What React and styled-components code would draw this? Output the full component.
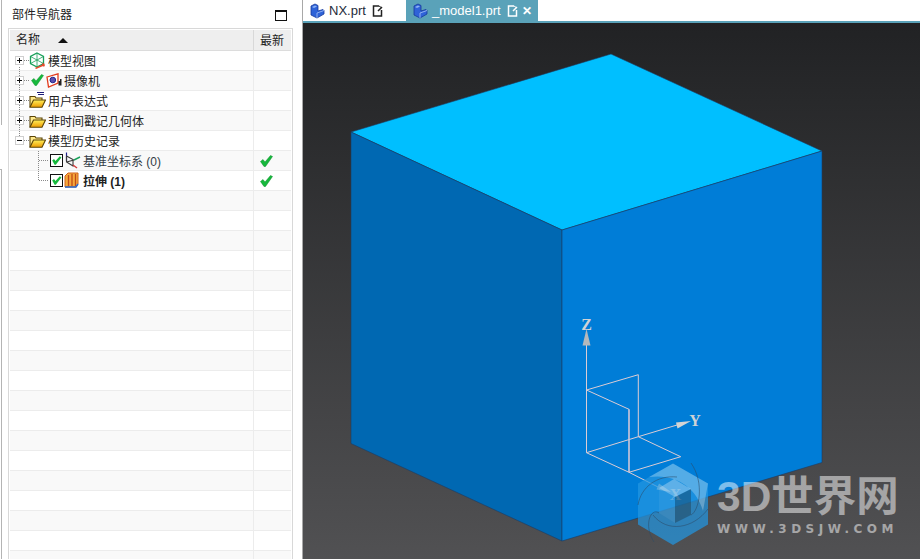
import React from 'react';
import styled, { createGlobalStyle } from 'styled-components';

const FONT = '"Liberation Sans", "Noto Sans CJK SC", sans-serif';

const GlobalStyle = createGlobalStyle`
  html, body {
    margin: 0;
    padding: 0;
    height: 100%;
    background: #fff;
    overflow: hidden;
  }
  #root { height: 100%; }
`;

const Page = styled.div`
  display: flex;
  width: 920px;
  height: 559px;
  overflow: hidden;
  font-family: ${FONT};
  font-size: 12px;
  color: #222;
`;

const Gutter = styled.div`
  display: flex;
  flex-direction: column;
  justify-content: space-between;
  width: 2px;
`;
const GutterPiece = styled.div`
  box-sizing: border-box;
  height: ${(p) => p.$h}px;
  border-right: 1px solid #b4b4b4;
  border-top: ${(p) => (p.$top ? '1px solid #b4b4b4' : 'none')};
`;

const Panel = styled.aside`
  display: flex;
  flex-direction: column;
  width: 300px;
  padding-left: 6px;
  box-sizing: border-box;
`;
const PanelHead = styled.header`
  display: flex;
  align-items: center;
  justify-content: space-between;
  height: 28px;
  padding: 0 16px 2px 4px;
  box-sizing: border-box;
  width: 295px;
`;
const Maximize = styled.span`
  display: block;
  box-sizing: border-box;
  width: 12px;
  height: 11px;
  margin-top: 5px;
  border: 1px solid #111;
  border-top-width: 2px;
`;

const Tree = styled.div`
  box-sizing: border-box;
  flex: 1;
  width: 285px;
  padding: 1px;
  border: 1px solid #d8d8d8;
  border-bottom: none;
  overflow: hidden;
`;
const HeadRow = styled.div`
  display: flex;
  height: 21px;
  box-sizing: border-box;
  background: #eeeeee;
  border-bottom: 1px solid #dcdcdc;
  line-height: 22px;
`;
const HeadName = styled.div`
  display: flex;
  align-items: center;
  width: 243px;
  padding-left: 6px;
  box-sizing: border-box;
`;
const SortArrow = styled.span`
  width: 0;
  height: 0;
  margin-left: 18px;
  border-left: 5px solid transparent;
  border-right: 5px solid transparent;
  border-bottom: 5px solid #111;
`;
const HeadLatest = styled.div`
  width: 38px;
  padding-left: 6px;
  box-sizing: border-box;
  border-left: 1px solid #d8d8d8;
`;

const Row = styled.div`
  display: flex;
  height: 20px;
  box-sizing: border-box;
  background: ${(p) => (p.$odd ? '#f9f9f9' : '#ffffff')};
  border-bottom: 1px solid #ececec;
`;
const NameCell = styled.div`
  display: flex;
  align-items: center;
  width: 243px;
  padding-bottom: 1px;
  box-sizing: border-box;
`;
const LatestCell = styled.div`
  display: flex;
  align-items: center;
  width: 38px;
  padding-left: 6px;
  box-sizing: border-box;
  border-left: 1px solid #ececec;
`;
const Guide = styled.svg`
  flex: none;
  display: block;
  width: ${(p) => p.width}px;
  height: 20px;
  margin-top: 1px;
`;
const IconSlot = styled.span`
  display: flex;
  flex: none;
  margin-left: ${(p) => p.$gap || 0}px;
`;
const Label = styled.span`
  margin-left: ${(p) => p.$gap}px;
  font-weight: ${(p) => (p.$bold ? 700 : 400)};
  color: ${(p) => (p.$muted ? '#333c46' : '#222')};
  white-space: nowrap;
`;

const Splitter = styled.div`
  width: 1px;
  background: #a8a8a8;
  flex: none;
`;

const Main = styled.main`
  flex: 1;
  display: flex;
  flex-direction: column;
  min-width: 0;
`;
const TabBar = styled.nav`
  display: flex;
  height: 21px;
  background: #fff;
  border-bottom: 2px solid #5aa2b9;
`;
const Tab = styled.div`
  display: flex;
  align-items: center;
  box-sizing: border-box;
  width: ${(p) => p.$w}px;
  padding-left: 6px;
  font-size: 13px;
  background: ${(p) => (p.$active ? '#5aa2b9' : '#ffffff')};
  color: ${(p) => (p.$active ? '#ffffff' : '#1e2a3a')};
`;
const TabText = styled.span`
  margin: 0 6px 0 4px;
`;
const CloseMark = styled.span`
  margin-left: 4px;
  font-size: 12px;
  font-weight: 700;
  line-height: 1;
`;

const Canvas = styled.div`
  position: relative;
  flex: 1;
  background: linear-gradient(180deg, #212224 0%, #515153 100%);
  overflow: hidden;
`;
const Scene = styled.svg`
  display: block;
  width: 617px;
  height: 536px;
`;
const Watermark = styled.div`
  position: absolute;
  right: 25px;
  bottom: 13px;
  display: flex;
  align-items: center;
  gap: 8px;
`;
const MarkText = styled.div`
  display: flex;
  flex-direction: column;
  width: 178px;
  color: rgba(255, 255, 255, 0.5);
  font-weight: 700;
`;
const MarkTitle = styled.div`
  font-size: 42.5px;
  line-height: 46px;
  white-space: nowrap;
`;
const MarkUrl = styled.div`
  margin-top: 2px;
  font-family: "DejaVu Sans", sans-serif;
  font-size: 12px;
  line-height: 14px;
  letter-spacing: 4.5px;
  white-space: nowrap;
`;

const Check = () => (
  <svg width="13" height="12" viewBox="0 0 13 12">
    <path d="M0.5 6.5 L3 4.5 L5 7 L10.5 0.5 L12.5 1.5 L5.5 11.5 L4 11.5 Z" fill="#16b83c" stroke="#0c8f2c" strokeWidth="0.5" />
  </svg>
);

const CheckBox = () => (
  <svg width="13" height="13" viewBox="0 0 13 13">
    <rect x="0.5" y="0.5" width="12" height="12" fill="#fff" stroke="#111" />
    <path d="M2.2 6.5 L4 5 L5.5 7 L9.8 2.2 L11.4 3.4 L5.8 10.8 L4.6 10.8 Z" fill="#16b83c" />
  </svg>
);

const Folder = ({ lines }) => (
  <svg width="17" height="16" viewBox="0 0 17 16">
    {lines && <path d="M8 0.5 H15 M9 2.5 H15" stroke="#1c1c78" strokeWidth="1" />}
    <path d="M1 15 V4.5 H6 L7 6 H13 V8" fill="#ffe98a" stroke="#5a4408" strokeWidth="1.1" />
    <path d="M1 15.3 L4.5 8 H16.5 L13 15.3 Z" fill="url(#folderFill)" stroke="#5a4408" strokeWidth="1.1" />
  </svg>
);

const ModelViews = () => (
  <svg width="17" height="17" viewBox="0 0 17 17">
    <g fill="none" stroke="#1aa05a" strokeWidth="1.3">
      <path d="M8 1 L14.5 4.5 V11.5 L8 15 L1.5 11.5 V4.5 Z" />
      <path d="M1.5 4.5 L8 8 L14.5 4.5 M8 8 V15 M8 1 V8 M1.5 11.5 L8 8 L14.5 11.5" strokeWidth="0.8" />
    </g>
    <path d="M6.5 16.5 L15.5 12.5 M15.5 12.5 L13 12 M15.5 12.5 L14.5 14.5" stroke="#e8482a" strokeWidth="1.4" fill="none" />
  </svg>
);

const Camera = () => (
  <svg width="17" height="15" viewBox="0 0 17 15">
    <path d="M1 4 L12 0.8 V10 L2.5 14 Z" fill="#fff" stroke="#e23a1c" strokeWidth="1.3" />
    <circle cx="6.8" cy="7" r="2.8" fill="#5a4fb0" stroke="#22228a" strokeWidth="1" />
    <path d="M12.5 8 H14 V6 H15.5 V12.5 H12.5 Z" fill="#222" />
  </svg>
);

const Datum = () => (
  <svg width="17" height="17" viewBox="0 0 17 17">
    <path d="M2.5 0.5 V9" stroke="#22228a" strokeWidth="1.2" />
    <path d="M2.5 4 L9 7.5 V14 L2.5 10 V4 M2.5 10 L10 8" fill="none" stroke="#3a3a3a" strokeWidth="1.1" />
    <path d="M10 8 L16 5" stroke="#1aa05a" strokeWidth="1.4" />
    <path d="M9 13 L13 16" stroke="#d43a3a" strokeWidth="1.4" />
  </svg>
);

const Extrude = () => (
  <svg width="15" height="16" viewBox="0 0 15 16">
    <path d="M1 4 L4 1 H14 V12 L12 15 H1 Z" fill="#f5a93c" stroke="#d0601a" strokeWidth="1" />
    <path d="M4.5 3 V14 M8 2 V14 M11.5 2 V14" stroke="#c04a18" strokeWidth="1.3" />
    <path d="M1 15 H12 L14 12" fill="none" stroke="#2a6ad0" strokeWidth="1.5" />
  </svg>
);

const PartIcon = () => (
  <svg width="16" height="16" viewBox="0 0 16 16">
    <path d="M2 3 L6 1 L9 2.5 V8 L14 6.5 L15 7.5 V11 L8 15 L2 12 Z" fill="#2f63d8" stroke="#16389a" strokeWidth="0.8" />
    <path d="M3 4 L6 2.5 L8 3.5 L5 5 Z" fill="#8db2f5" />
    <path d="M8 15 V10 L15 7.5" fill="none" stroke="#a8c4f8" strokeWidth="0.8" />
  </svg>
);

const SaveMark = ({ color }) => (
  <svg width="11" height="12" viewBox="0 0 11 12">
    <path d="M7 1 H1.5 V11 H9.5 V5 M6 6 L10 2" fill="none" stroke={color} strokeWidth="1.5" />
    <path d="M7 1 L10 3" stroke={color} strokeWidth="1" />
  </svg>
);

// top-level gutter: expander box and dotted guide lines
const TopGuide = ({ minus, from, to }) => (
  <Guide width="19" viewBox="0 0 19 20">
    {from !== undefined && (
      <path d={`M9.5 ${from} V${to}`} stroke="#8a8a8a" strokeDasharray="1 1" />
    )}
    <path d="M14 9.5 H19" stroke="#8a8a8a" strokeDasharray="1 1" />
    <rect x="5.5" y="5.5" width="8" height="8" fill="#fff" stroke="#cfcfcf" />
    <path d="M7 9.5 H12" stroke="#111" />
    {!minus && <path d="M9.5 7 V12" stroke="#111" />}
  </Guide>
);

const ChildGuide = ({ to }) => (
  <Guide width="38" viewBox="0 0 38 20">
    <path d={`M28.5 0 V${to}`} stroke="#8a8a8a" strokeDasharray="1 1" />
    <path d="M29 9.5 H38" stroke="#8a8a8a" strokeDasharray="1 1" />
  </Guide>
);

const treeRows = [
  { guide: <TopGuide from={16} to={20} />, icons: <IconSlot><ModelViews /></IconSlot>, label: '模型视图', gap: 2 },
  { guide: <TopGuide from={0} to={20} />, icons: <><IconSlot $gap={2}><Check /></IconSlot><IconSlot $gap={2}><Camera /></IconSlot></>, label: '摄像机', gap: 1 },
  { guide: <TopGuide from={0} to={20} />, icons: <IconSlot><Folder lines /></IconSlot>, label: '用户表达式', gap: 2 },
  { guide: <TopGuide from={0} to={20} />, icons: <IconSlot><Folder /></IconSlot>, label: '非时间戳记几何体', gap: 2 },
  { guide: <TopGuide minus from={0} to={6} />, icons: <IconSlot><Folder /></IconSlot>, label: '模型历史记录', gap: 2 },
  { guide: <ChildGuide to={20} />, icons: <><IconSlot $gap={2}><CheckBox /></IconSlot><IconSlot $gap={1}><Datum /></IconSlot></>, label: '基准坐标系 (0)', gap: 2, muted: true, latest: true },
  { guide: <ChildGuide to={10} />, icons: <><IconSlot $gap={2}><CheckBox /></IconSlot><IconSlot $gap={1}><Extrude /></IconSlot></>, label: '拉伸 (1)', gap: 4, bold: true, latest: true },
];

const blankRows = Array.from({ length: 19 });

const Triad = () => (
  <g>
    <g fill="none" stroke="#dcccd4" strokeWidth="1">
      <path d="M586.5 345 V452.7 L629 472.3 L680.7 456.7 L638.3 436.7 L586.5 452.7" />
      <path d="M586.5 390 L638.3 374.7 V436.7 M586.5 390 L629 409.3" />
      <path d="M638.3 436.7 L677 425 M629 472.3 L660 488" />
      <path d="M629 409.3 V472.3" strokeWidth="1.6" stroke="#cfc6d8" />
    </g>
    <path d="M586.5 329 L590.5 345.5 H582.5 Z" fill="#b4b8bc" />
    <path d="M691 421 L676 422.5 L677.5 428.5 Z" fill="#d4d4d4" />
    <path d="M671 492 L659 483.5 L656.5 489.5 Z" fill="#d8d8d8" />
    <g fontFamily='"Liberation Serif", serif' fontWeight="700" fontSize="16" fill="#cfd2d6" textAnchor="middle">
      <text x="586.5" y="329.5">Z</text>
      <text x="695" y="426">Y</text>
      <text x="675.5" y="499.5">X</text>
    </g>
  </g>
);

const Logo = () => (
  <svg width="72" height="83" viewBox="0 0 72 83">
    <path d="M36 0.5 L71 20.5 V61.5 L36 82 L1 61.5 V20.5 Z" fill="rgb(34,150,225)" fillOpacity="0.72" />
    <path d="M36 0.5 L71 20.5 L66 48 C60 26 40 10 12 14 Z" fill="#ffffff" fillOpacity="0.26" />
    <path d="M22 25 L37 16 L54 26 L38 34 Z" fill="#ffffff" fillOpacity="0.3" />
    <path d="M22 25 V50 L38 60 V34 Z" fill="#ffffff" fillOpacity="0.06" />
    <path d="M38 60 L54 52 V26 L38 34 Z" fill="#1a1a1a" fillOpacity="0.3" />
    <g fill="none" stroke="#2c4a68" strokeOpacity="0.55" strokeWidth="1">
      <path d="M1 42 C4 24 20 12 40 14" />
      <path d="M54 0 C68 20 62 48 54 52" />
      <path d="M17 79 C6 62 14 44 22 50" />
      <path d="M16 52 C30 70 56 66 71 46" />
    </g>
  </svg>
);

export default function App() {
  return (
    <Page>
      <GlobalStyle />
      <svg width="0" height="0" style={{ position: 'absolute' }}>
        <defs>
          <linearGradient id="folderFill" x1="0" y1="0" x2="0" y2="1">
            <stop offset="0" stopColor="#fff05a" />
            <stop offset="1" stopColor="#ee9a00" />
          </linearGradient>
        </defs>
      </svg>
      <Gutter>
        <GutterPiece $h={125} />
        <GutterPiece $h={390} $top />
      </Gutter>
      <Panel>
        <PanelHead>
          <span>部件导航器</span>
          <Maximize />
        </PanelHead>
        <Tree>
          <HeadRow>
            <HeadName>
              名称
              <SortArrow />
            </HeadName>
            <HeadLatest>最新</HeadLatest>
          </HeadRow>
          {treeRows.map((r, i) => (
            <Row key={r.label} $odd={i % 2 === 1}>
              <NameCell>
                {r.guide}
                {r.icons}
                <Label $gap={r.gap} $bold={r.bold} $muted={r.muted}>{r.label}</Label>
              </NameCell>
              <LatestCell>{r.latest && <Check />}</LatestCell>
            </Row>
          ))}
          {blankRows.map((_, i) => (
            <Row key={i} $odd={(i + treeRows.length) % 2 === 1}>
              <NameCell />
              <LatestCell />
            </Row>
          ))}
        </Tree>
      </Panel>
      <Splitter />
      <Main>
        <TabBar>
          <Tab $w={103}>
            <PartIcon />
            <TabText>NX.prt</TabText>
            <SaveMark color="#222" />
          </Tab>
          <Tab $w={132} $active>
            <PartIcon />
            <TabText>_model1.prt</TabText>
            <SaveMark color="#fff" />
            <CloseMark>✕</CloseMark>
          </Tab>
        </TabBar>
        <Canvas>
          <Scene viewBox="303 23 617 536">
            <g stroke="#1c3d63" strokeWidth="0.6" strokeLinejoin="round">
              <path d="M611 54 L822 151 L562 230 L351 132 Z" fill="#00bfff" />
              <path d="M351 132 L562 230 V541 L351 443.5 Z" fill="#0068b2" />
              <path d="M562 230 L822 151 V462.5 L562 541 Z" fill="#007dd7" />
            </g>
            <Triad />
          </Scene>
          <Watermark>
            <Logo />
            <MarkText>
              <MarkTitle>3D世界网</MarkTitle>
              <MarkUrl>WWW.3DSJW.COM</MarkUrl>
            </MarkText>
          </Watermark>
        </Canvas>
      </Main>
    </Page>
  );
}
